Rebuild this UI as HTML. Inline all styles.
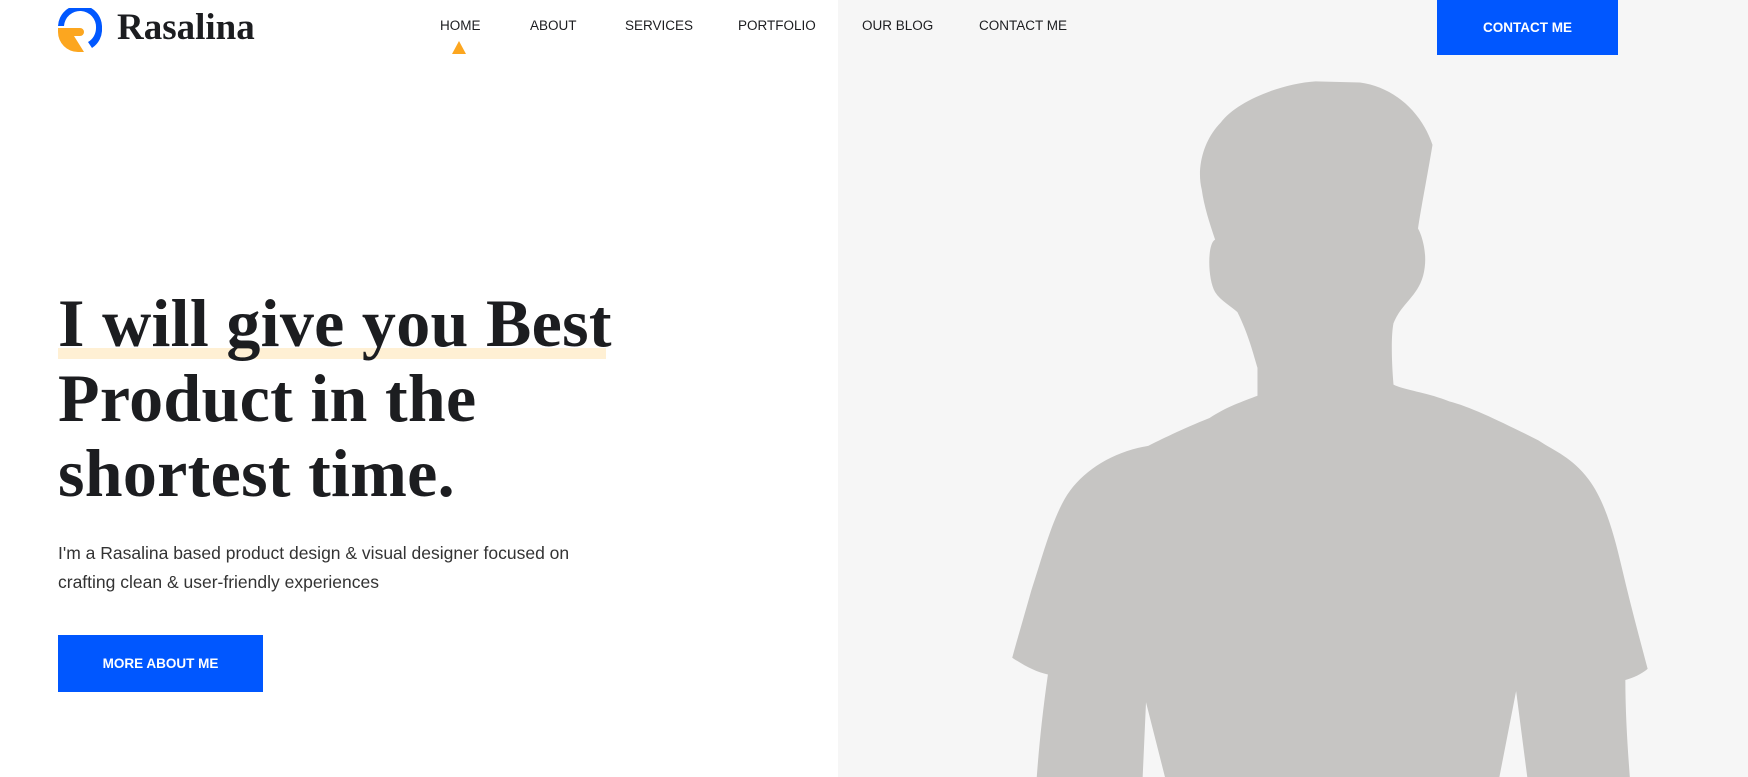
<!DOCTYPE html>
<html><head><meta charset="utf-8"><style>
*{margin:0;padding:0;box-sizing:border-box}
body{width:1748px;height:777px;overflow:hidden;background:#fff;position:relative;font-family:"Liberation Sans",sans-serif;color:#1c1d20}
.grey{position:absolute;left:838px;top:0;width:910px;height:777px;background:#f6f6f6}
.logo{position:absolute;left:58px;top:8px}
.brand{position:absolute;left:117px;top:6px;font-family:"Liberation Serif",serif;font-weight:bold;font-size:37px;color:#1c1d20}
.nav{position:absolute;top:18px;font-size:13.5px;color:#1c1d20}
.tri{position:absolute;left:452px;top:41px;width:0;height:0;border-left:7px solid transparent;border-right:7px solid transparent;border-bottom:13px solid #fca61f}
.btn{position:absolute;background:#0057ff;color:#fff;font-weight:bold;font-size:13.5px;display:flex;align-items:center;justify-content:center}
h1{position:absolute;left:58px;top:286px;font-family:"Liberation Serif",serif;font-weight:bold;font-size:68px;line-height:75px;color:#1c1d20;letter-spacing:0.3px}
.hl{position:absolute;left:58px;top:348px;width:548px;height:11px;background:#fff0d4}
p{position:absolute;left:58px;top:539px;font-size:17.5px;line-height:29px;color:#333}
</style></head><body>
<div class="grey"></div>
<svg class="logo" width="44" height="44" viewBox="0 0 44 44">
<path d="M6 18 A16 16 0 0 1 38 20 A16 16 0 0 1 30 34 L34 40 A22 22 0 0 0 44 20 A22 22 0 0 0 0 18Z" fill="#0057ff"/>
<path d="M0 20 H22 A4 4 0 0 1 22 28 H16 L26 44 H20 A20 20 0 0 1 0 24Z" fill="#fca61f"/>
</svg>
<div class="brand">Rasalina</div>
<div class="nav" style="left:440px">HOME</div>
<div class="nav" style="left:530px">ABOUT</div>
<div class="nav" style="left:625px">SERVICES</div>
<div class="nav" style="left:738px">PORTFOLIO</div>
<div class="nav" style="left:862px">OUR BLOG</div>
<div class="nav" style="left:979px">CONTACT ME</div>
<div class="tri"></div>
<div class="btn" style="left:1437px;top:0;width:181px;height:55px">CONTACT ME</div>
<div class="hl"></div>
<h1>I will give you Best<br>Product in the<br>shortest time.</h1>
<p>I'm a Rasalina based product design &amp; visual designer focused on<br>crafting clean &amp; user-friendly experiences</p>
<div class="btn" style="left:58px;top:635px;width:205px;height:57px">MORE ABOUT ME</div>
<svg style="position:absolute;left:0;top:0" width="1748" height="777" viewBox="0 0 1568 697">
<path fill="#c6c5c3" d="M1180 73 C1150 75 1110 90 1095 110 C1080 125 1073 150 1078 170 C1080 185 1085 200 1090 215 C1083 218 1083 250 1090 262 C1095 270 1105 275 1110 280 C1120 300 1125 320 1128 330 L1128 355 C1115 360 1100 365 1085 375 C1060 385 1040 395 1030 400 C1000 405 975 420 960 440 C945 460 935 500 925 530 C918 555 912 575 908 590 C920 598 930 603 940 605 C935 640 932 670 930 697 L1462 697 C1460 670 1458 640 1458 610 C1465 608 1472 605 1478 600 C1470 570 1462 540 1455 510 C1448 480 1440 450 1425 430 C1410 410 1395 405 1380 395 C1350 380 1320 365 1300 360 C1280 352 1260 350 1250 345 C1248 320 1248 300 1250 290 C1258 270 1275 265 1278 240 C1280 225 1275 210 1272 205 C1275 185 1280 160 1285 130 C1275 100 1250 78 1220 74 Z"/>
<path fill="#f6f6f6" d="M1025 697 L1028 630 L1045 697Z M1370 697 L1360 620 L1345 697Z"/>
</svg>
</body></html>
